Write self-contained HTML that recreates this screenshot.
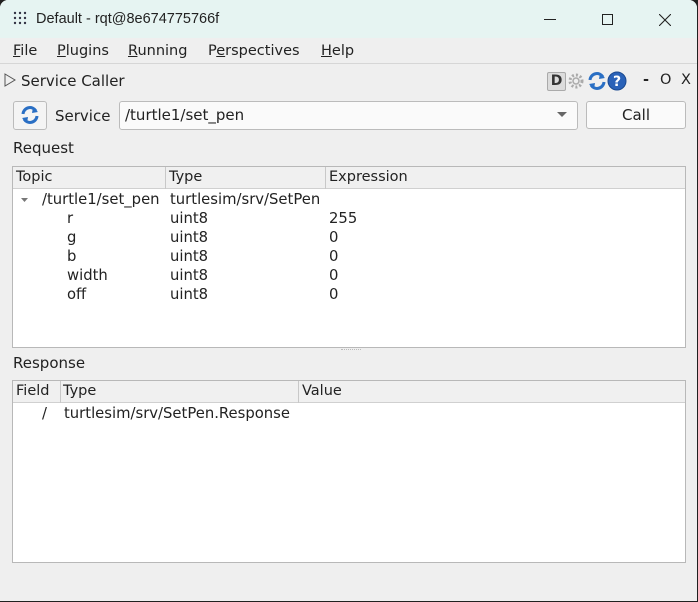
<!DOCTYPE html>
<html><head><style>
*{margin:0;padding:0;box-sizing:border-box}
body{width:698px;height:602px;background:#202020;overflow:hidden;font-family:"DejaVu Sans","Liberation Sans",sans-serif;color:#222;position:relative}
.win{position:absolute;left:0;top:0;width:697px;height:601px;background:#efefef;border-radius:8px 8px 0 0;overflow:hidden}
.title{position:absolute;left:0;top:0;width:100%;height:38px;background:#e6f4f2;font-family:"Liberation Sans","DejaVu Sans",sans-serif;font-size:14px}
.a{position:absolute;white-space:nowrap}
.menu{font-size:14.5px}
.menu u{text-decoration:underline}
.box{position:absolute;background:#fff;border:1px solid #b8b8b8}
.hdr{position:absolute;left:0;top:0;right:0;height:22px;background:#f0f0f0;border-bottom:1px solid #d0d0d0;font-size:14.5px}
.hdr span{position:absolute;top:2px}
.sep{position:absolute;top:0;width:1px;height:22px;background:#c8c8c8}
.t{font-size:14.8px}
.l{font-size:15px}
</style></head><body>
<div class="win">
<div class="title">
 <svg class="a" style="left:13px;top:11px" width="16" height="16"><g fill="#334"><circle cx="2" cy="2" r="1.2"/><circle cx="7" cy="2" r="1.2"/><circle cx="12" cy="2" r="1.2"/><circle cx="2" cy="7" r="1.2"/><circle cx="7" cy="7" r="1.2"/><circle cx="12" cy="7" r="1.2"/><circle cx="2" cy="12" r="1.2"/><circle cx="7" cy="12" r="1.2"/><circle cx="12" cy="12" r="1.2"/></g></svg>
 <span class="a" style="left:36px;top:11px;font-size:14.5px">Default - rqt@8e674775766f</span>
 <div class="a" style="left:544px;top:19px;width:12px;height:1px;background:#222"></div>
 <div class="a" style="left:602px;top:14px;width:11px;height:11px;border:1px solid #222"></div>
 <svg class="a" style="left:659px;top:14px" width="12" height="12"><path d="M0 0L12 12M12 0L0 12" stroke="#222" stroke-width="1.1"/></svg>
</div>
<div class="menu">
 <span class="a" style="left:13px;top:43px"><u>F</u>ile</span>
 <span class="a" style="left:57px;top:43px"><u>P</u>lugins</span>
 <span class="a" style="left:128px;top:43px"><u>R</u>unning</span>
 <span class="a" style="left:208px;top:43px">P<u>e</u>rspectives</span>
 <span class="a" style="left:321px;top:43px"><u>H</u>elp</span>
</div>
<div class="a" style="left:0;top:63px;width:100%;height:1px;background:#d6d6d6"></div>
<svg class="a" style="left:4px;top:73px" width="12" height="14"><path d="M1 1L11 7L1 13Z" fill="none" stroke="#555"/></svg>
<span class="a l" style="left:21px;top:72px">Service Caller</span>
<div class="a" style="left:547px;top:72px;width:19px;height:19px;background:#dcdcdc;border:1px solid #aaa;border-radius:2px;font-size:14px;text-align:center;line-height:17px;font-weight:bold;color:#333">D</div>
<svg class="a" style="left:567px;top:72px" width="18" height="18"><circle cx="9" cy="9" r="6" fill="none" stroke="#aaa" stroke-width="3" stroke-dasharray="2 2"/><circle cx="9" cy="9" r="3" fill="none" stroke="#aaa" stroke-width="1.5"/></svg>
<svg class="a" style="left:587px;top:71px" width="20" height="20"><path d="M3 9A7 7 0 0 1 16 6" fill="none" stroke="#2a6fc4" stroke-width="3"/><path d="M17 11A7 7 0 0 1 4 14" fill="none" stroke="#2a6fc4" stroke-width="3"/><path d="M13 2L18 7L12 8Z M7 18L2 13L8 12Z" fill="#2a6fc4"/></svg>
<svg class="a" style="left:607px;top:71px" width="20" height="20"><circle cx="10" cy="10" r="9" fill="#2a62b8" stroke="#1b4a90"/><text x="10" y="15" font-size="14" font-weight="bold" fill="#fff" text-anchor="middle" font-family="DejaVu Sans">?</text></svg>
<span class="a" style="left:643px;top:72px;font-size:14.5px;font-weight:bold">-</span>
<span class="a" style="left:660px;top:72px;font-size:14.5px">O</span>
<span class="a" style="left:681px;top:72px;font-size:14.5px">X</span>

<div class="a" style="left:13px;top:101px;width:34px;height:29px;background:#f4f4f4;border:1px solid #bbb;border-radius:3px"></div>
<svg class="a" style="left:20px;top:105px" width="20" height="20"><path d="M3 9A7 7 0 0 1 16 6" fill="none" stroke="#2a6fc4" stroke-width="3"/><path d="M17 11A7 7 0 0 1 4 14" fill="none" stroke="#2a6fc4" stroke-width="3"/><path d="M13 2L18 7L12 8Z M7 18L2 13L8 12Z" fill="#2a6fc4"/></svg>
<span class="a l" style="left:55px;top:107px">Service</span>
<div class="a" style="left:119px;top:101px;width:459px;height:29px;background:#fafafa;border:1px solid #bbb;border-radius:3px"></div>
<span class="a l" style="left:125px;top:106px">/turtle1/set_pen</span>
<svg class="a" style="left:557px;top:112px" width="10" height="6"><path d="M0 0H10L5 5Z" fill="#666"/></svg>
<div class="a l" style="left:586px;top:101px;width:100px;height:28px;background:#fafafa;border:1px solid #bbb;border-radius:3px;text-align:center;line-height:26px">Call</div>

<span class="a l" style="left:13px;top:139px">Request</span>
<div class="box" style="left:12px;top:166px;width:674px;height:182px">
 <div class="hdr"><span style="left:3px">Topic</span><span style="left:156px">Type</span><span style="left:316px">Expression</span>
 <div class="sep" style="left:152px"></div><div class="sep" style="left:312px"></div></div>
 <svg class="a" style="left:8px;top:31px" width="8" height="5"><path d="M0 0H7L3.5 4Z" fill="#777"/></svg>
 <div class="t">
 <span class="a" style="left:29px;top:24px">/turtle1/set_pen</span><span class="a" style="left:157px;top:24px">turtlesim/srv/SetPen</span>
 <span class="a" style="left:54px;top:43px">r</span><span class="a" style="left:157px;top:43px">uint8</span><span class="a" style="left:316px;top:43px">255</span>
 <span class="a" style="left:54px;top:62px">g</span><span class="a" style="left:157px;top:62px">uint8</span><span class="a" style="left:316px;top:62px">0</span>
 <span class="a" style="left:54px;top:81px">b</span><span class="a" style="left:157px;top:81px">uint8</span><span class="a" style="left:316px;top:81px">0</span>
 <span class="a" style="left:54px;top:100px">width</span><span class="a" style="left:157px;top:100px">uint8</span><span class="a" style="left:316px;top:100px">0</span>
 <span class="a" style="left:54px;top:119px">off</span><span class="a" style="left:157px;top:119px">uint8</span><span class="a" style="left:316px;top:119px">0</span>
 </div>
</div>
<div class="a" style="left:341px;top:349px;width:20px;height:1px;border-top:1px dotted #bbb"></div>
<span class="a l" style="left:13px;top:354px">Response</span>
<div class="box" style="left:12px;top:380px;width:674px;height:183px">
 <div class="hdr"><span style="left:3px">Field</span><span style="left:50px">Type</span><span style="left:289px">Value</span>
 <div class="sep" style="left:47px"></div><div class="sep" style="left:285px"></div></div>
 <div class="t"><span class="a" style="left:29px;top:24px">/</span><span class="a" style="left:51px;top:24px">turtlesim/srv/SetPen.Response</span></div>
</div>
</div>
</body></html>
